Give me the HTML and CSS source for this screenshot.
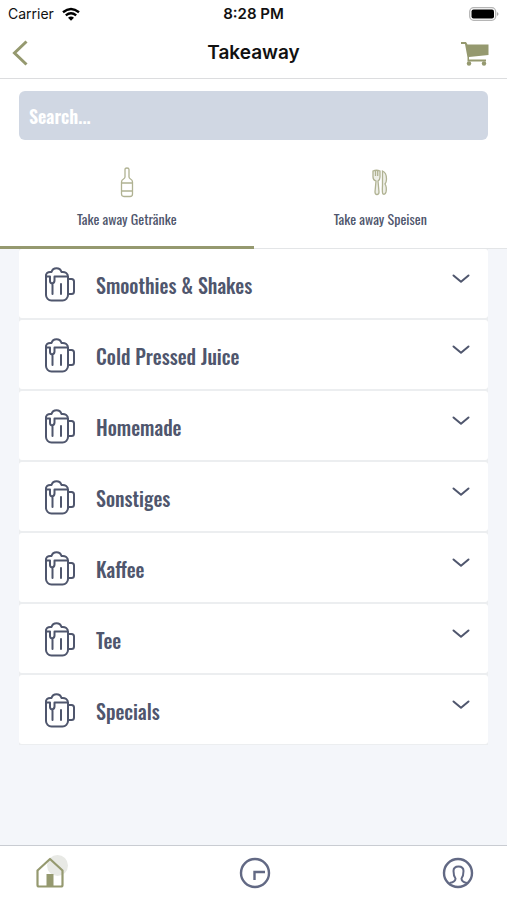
FILE: index.html
```html
<!DOCTYPE html>
<html lang="de">
<head>
<meta charset="utf-8">
<meta name="viewport" content="width=device-width, initial-scale=1">
<title>Takeaway</title>
<link rel="stylesheet" href="styles.css">
</head>
<body>
<svg class="sprite" aria-hidden="true">
  <symbol id="mug" viewBox="0 0 32 36">
    <path d="M2 9v19a5.500 5.500 0 0 0 5.500 5.500h11A5.500 5.500 0 0 0 24 28V10M24 12h3.500A2.500 2.500 0 0 1 30 14.500v10a2.500 2.500 0 0 1-2.500 2.500H24"/>
    <path d="M2 9.500c-.5-3 1.500-5 5.500-4.500C9 0 16 0 17.500 5 21.500 4.500 24 6.500 24 9.500M2 9.500h4V14q0 2 2 2.500 2.500-.5 2.500-3V9.500H24M8.500 17v10M17 17v10"/>
  </symbol>
  <symbol id="chevron" viewBox="0 0 18 10">
    <path d="M1.500 1.500L9 7.800l7.500-6.300"/>
  </symbol>
</svg>
<div class="app">
  <header class="header">
    <div class="status">
      <span class="carrier">Carrier
        <svg class="wifi" viewBox="0 0 18 14"><path d="M1 5.200q8-6.600 16 0M3.800 8.400q5.200-4.200 10.400 0" fill="none" stroke="#000" stroke-width="2.400"/><path d="M6 10.800q3-2.500 6 0l-3 3z"/></svg>
      </span>
      <span class="time">8:28 PM</span>
      <svg class="battery" viewBox="0 0 30 14"><rect x=".7" y=".7" width="26" height="12.600" rx="4" fill="#fff" stroke="#b5b5b5" stroke-width="1.300"/><rect x="2.500" y="2.500" width="22.500" height="9" rx="2" fill="#000"/><path d="M28 5q3 2 0 4z" fill="#aaa"/></svg>
    </div>
    <div class="navbar">
      <button class="icon-button back" type="button" aria-label="Back"><svg viewBox="0 0 16 26"><path d="M14.500 1.500L2.500 13l12 11.500" fill="none" stroke="currentColor" stroke-width="3"/></svg></button>
      <h1>Takeaway</h1>
      <button class="icon-button cart" type="button" aria-label="Cart"><svg viewBox="0 0 28 24"><path d="M0 0h5l1.500 2.500H27.500v10.500L8 15v2.500H25v2H6.500v-4L4 2H0z" fill="currentColor"/><circle cx="8" cy="21.500" r="2.200" fill="currentColor"/><circle cx="23" cy="21.500" r="2.200" fill="currentColor"/></svg></button>
    </div>
  </header>
  <div class="search"><input type="search" placeholder="Search..." aria-label="Search"></div>
  <nav class="tabs">
    <button class="tab active" type="button">
      <svg viewBox="0 0 14 32"><path d="M5 3.500Q5 2 7 2t2 1.500V11q0 1 1.500 2 2 1 2 3v12q0 2.500-2.500 2.500H4q-2.500 0-2.500-2.500V16q0-2 2-3Q5 12 5 11zM1.500 17h11M1.500 25h11"/></svg>
      <span>Take away Getränke</span>
    </button>
    <button class="tab" type="button">
      <svg viewBox="0 0 14 32"><g fill="#eeefe8"><path d="M0 5q3.500-1.500 7 0v6q0 3-2 4l1 11q0 2.500-2 2.500T2 26l1-11q-3-1-3-4z"/><path d="M2.500 5v5M4.700 5v5"/><path d="M9.500 5q4 1.500 4 8 0 3-1.500 5 2 3 1 8-1 3-3 2-1-1-.5-9z"/></g></svg>
      <span>Take away Speisen</span>
    </button>
  </nav>
  <main>
    <ul class="categories">
      <li><button class="category" type="button"><svg class="mug"><use href="#mug"/></svg><span>Smoothies &amp; Shakes</span><svg class="chevron"><use href="#chevron"/></svg></button></li>
      <li><button class="category" type="button"><svg class="mug"><use href="#mug"/></svg><span>Cold Pressed Juice</span><svg class="chevron"><use href="#chevron"/></svg></button></li>
      <li><button class="category" type="button"><svg class="mug"><use href="#mug"/></svg><span>Homemade</span><svg class="chevron"><use href="#chevron"/></svg></button></li>
      <li><button class="category" type="button"><svg class="mug"><use href="#mug"/></svg><span>Sonstiges</span><svg class="chevron"><use href="#chevron"/></svg></button></li>
      <li><button class="category" type="button"><svg class="mug"><use href="#mug"/></svg><span>Kaffee</span><svg class="chevron"><use href="#chevron"/></svg></button></li>
      <li><button class="category" type="button"><svg class="mug"><use href="#mug"/></svg><span>Tee</span><svg class="chevron"><use href="#chevron"/></svg></button></li>
      <li><button class="category" type="button"><svg class="mug"><use href="#mug"/></svg><span>Specials</span><svg class="chevron"><use href="#chevron"/></svg></button></li>
    </ul>
  </main>
  <nav class="bottom-bar">
    <a class="home" href="#home" aria-label="Home"><svg viewBox="0 0 32 32"><circle cx="21.500" cy="8.500" r="10.500" fill="#e8e9e5"/><path d="M1.500 13.500L14 2l12.500 11.500v14.500q0 1.500-1.500 1.500H3q-1.500 0-1.500-1.500z" fill="none" stroke="currentColor" stroke-width="2.200" stroke-linejoin="round"/><path d="M10.500 17h7v12h-7z" fill="currentColor"/></svg></a>
    <a href="#orders" aria-label="Orders"><svg viewBox="0 0 32 32"><g fill="none" stroke="currentColor" stroke-width="2.400"><circle cx="16" cy="16" r="14"/><path d="M15.500 23v-8H26"/></g></svg></a>
    <a href="#profile" aria-label="Profile"><svg viewBox="0 0 32 32"><g fill="none" stroke="currentColor" stroke-width="2.400"><circle cx="16" cy="16" r="14"/><path d="M7.500 26q6-1 6-4.500-2-2.500-2-7.500 0-4.500 5-4.500t5 4.500q0 5-2 7.500 0 3.500 5.500 4.500" stroke-width="2"/></g></svg></a>
  </nav>
</div>
</body>
</html>
```
FILE: styles.css
```css
:root {
  --olive: #95996f;
  --slate: #4f566d;
  --page: #f4f6fa;
  --condensed: "Oswald", "Liberation Sans Narrow", "Liberation Sans", sans-serif;
}

* { box-sizing: border-box; }

body {
  margin: 0;
  background: var(--page);
  color: var(--slate);
  font-family: Inter, "Liberation Sans", sans-serif;
}

button {
  border: 0;
  padding: 0;
  background: none;
  color: inherit;
  font: inherit;
  cursor: pointer;
}

svg { display: block; flex: none; }

.sprite { position: absolute; width: 0; height: 0; }

.app {
  display: flex;
  flex-direction: column;
  min-height: 100vh;
}

.header {
  background: #fff;
  color: #111;
  border-bottom: 1px solid #dcdddf;
}

.status {
  display: grid;
  grid-template-columns: 1fr auto 1fr;
  align-items: center;
  height: 27px;
  padding: 0 8px;
  font-size: 14px;
}

.carrier { display: flex; align-items: center; gap: 8px; }
.wifi { width: 18px; height: 14px; }
.time { font-size: 15px; font-weight: 600; }
.battery { width: 30px; height: 14px; justify-self: end; }

.navbar {
  display: grid;
  grid-template-columns: 1fr auto 1fr;
  align-items: center;
  height: 51px;
  padding: 0 12px;
}

.navbar h1 {
  margin: 0;
  font-size: 19px;
  font-weight: 600;
  line-height: 24px;
}

.icon-button { color: var(--olive); }
.back { justify-self: start; }
.back svg { width: 16px; height: 26px; }
.cart { justify-self: end; padding: 2px 6px 0; }
.cart svg { width: 28px; height: 24px; }

.search { padding: 12px 19px; background: #fff; }

.search input {
  display: block;
  width: 100%;
  height: 49px;
  padding: 0 10px;
  border: 0;
  border-radius: 6px;
  background: #d0d7e3;
  color: #fff;
  font: 600 18px var(--condensed);
  appearance: none;
}

.search input::placeholder { color: #fff; opacity: 1; }

.tabs {
  display: grid;
  grid-template-columns: 1fr 1fr;
  background: #fff;
}

.tab {
  display: flex;
  flex-direction: column;
  align-items: center;
  gap: 11px;
  height: 97px;
  padding-top: 14px;
  border-bottom: 1px solid #e3e5e7;
  font: 400 14px/20px var(--condensed);
}

.tab.active { border-bottom: 3px solid var(--olive); }

.tab svg {
  width: 14px;
  height: 32px;
  fill: none;
  stroke: #b0b292;
  stroke-width: 1.300;
  overflow: visible;
}

main { flex: 1; padding: 0 19px; }

.categories {
  display: grid;
  gap: 2px;
  margin: 0;
  padding: 0;
  list-style: none;
  background: #eceef0;
  border-bottom: 1px solid #eceef0;
}

.category {
  display: flex;
  align-items: center;
  width: 100%;
  height: 69px;
  padding: 2px 18px 0 25px;
  border-radius: 3px;
  background: #fff;
  font: 500 20px/28px var(--condensed);
  text-align: left;
}

.category span { flex: 1; padding-left: 20px; }

.category svg {
  fill: none;
  stroke: currentColor;
  stroke-width: 2;
  stroke-linecap: round;
  stroke-linejoin: round;
}

.mug { width: 32px; height: 36px; }
.chevron { width: 18px; height: 10px; margin-bottom: 12px; }

.bottom-bar {
  display: flex;
  justify-content: space-between;
  align-items: center;
  height: 55px;
  padding: 0 33px 0 36px;
  border-top: 1px solid #c9ccd2;
  background: #fff;
}

.bottom-bar a { color: #626984; }
.bottom-bar .home { color: var(--olive); }
.bottom-bar svg { width: 32px; height: 32px; overflow: visible; }
```
